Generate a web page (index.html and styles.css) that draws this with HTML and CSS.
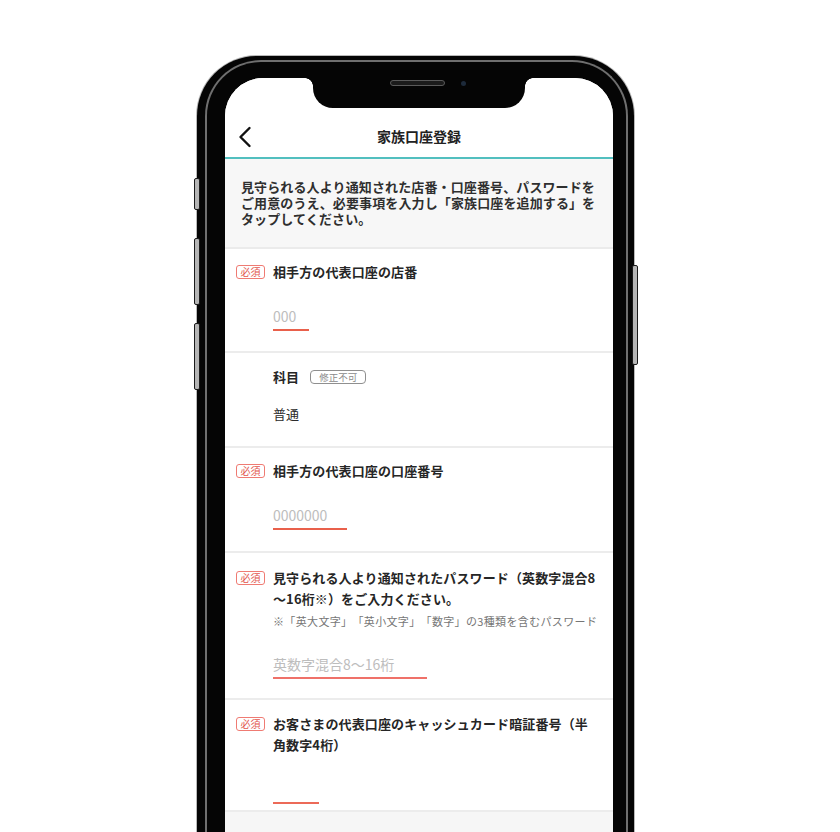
FILE: index.html
```html
<!DOCTYPE html>
<html lang="ja">
<head>
<meta charset="utf-8">
<title>家族口座登録</title>
<link rel="stylesheet" href="styles.css">
</head>
<body>
<div class="stage">
  <div class="phone">
    <span class="btn btn-mute"></span>
    <span class="btn btn-vol1"></span>
    <span class="btn btn-vol2"></span>
    <span class="btn btn-power"></span>
    <div class="screen">
      <div class="notch"><span class="speaker"></span><span class="camera"></span></div>
      <div class="status"></div>
      <header class="nav">
        <svg class="back" width="14" height="22" viewBox="0 0 14 22"><polyline points="11.5,2 2.5,11 11.5,20" fill="none" stroke="#111" stroke-width="2.4" stroke-linecap="round" stroke-linejoin="round"/></svg>
        <h1 class="title">家族口座登録</h1>
        <span></span>
      </header>
      <p class="intro">見守られる人より通知された店番・口座番号、パスワードを<br>ご用意のうえ、必要事項を入力し「家族口座を追加する」を<br>タップしてください。</p>

      <section class="field">
        <span class="badge">必須</span>
        <span class="label">相手方の代表口座の店番</span>
        <div class="input w-3">000</div>
      </section>

      <section class="field field-static">
        <div class="label-row"><span class="label">科目</span><span class="lock">修正不可</span></div>
        <div class="value">普通</div>
      </section>

      <section class="field field-acct">
        <span class="badge">必須</span>
        <span class="label">相手方の代表口座の口座番号</span>
        <div class="input w-7">0000000</div>
      </section>

      <section class="field field-pw">
        <span class="badge">必須</span>
        <span class="label">見守られる人より通知されたパスワード（英数字混合8<br>〜16桁※）をご入力ください。</span>
        <p class="note">※「英大文字」「英小文字」「数字」の3種類を含むパスワード</p>
        <div class="input w-pw">英数字混合8〜16桁</div>
      </section>

      <section class="field field-last">
        <span class="badge">必須</span>
        <span class="label">お客さまの代表口座のキャッシュカード暗証番号（半<br>角数字4桁）</span>
        <div class="input w-4"></div>
      </section>

      <div class="rest"></div>
    </div>
  </div>
</div>
</body>
</html>
```

FILE: styles.css
```css
html, body {
  margin: 0;
  padding: 0;
  background: #ffffff;
}
body {
  height: 832px;
  overflow: hidden;
  font-family: "Noto Sans CJK JP", "Noto Sans", sans-serif;
  color: #2b2b2b;
  text-spacing-trim: space-all;
}
.stage {
  padding: 56px 0 0 197px;
}
.phone {
  position: relative;
  width: 437px;
  height: 860px;
  box-sizing: border-box;
  padding: 22px 21px 0 28px;
  background: #050505;
  border-radius: 60px 60px 0 0;
  box-shadow: 0 0 0 1px #b9b9b9;
}
.phone::before {
  content: "";
  position: absolute;
  top: 4px;
  left: 8px;
  right: 6px;
  bottom: 0;
  border: 2px solid #6f6f6f;
  border-bottom: none;
  border-radius: 56px 56px 0 0;
  pointer-events: none;
}
.btn {
  position: absolute;
  width: 4px;
  background: #b5b5b5;
  border: 1px solid #1a1a1a;
  border-radius: 2px;
}
.btn-mute { left: -3px; top: 122px; height: 30px; }
.btn-vol1 { left: -3px; top: 182px; height: 65px; }
.btn-vol2 { left: -3px; top: 267px; height: 65px; }
.btn-power { right: -4px; top: 209px; height: 98px; }

.screen {
  position: relative;
  height: 100%;
  background: #f6f6f6;
  border-radius: 38px 38px 0 0;
  overflow: hidden;
}
.notch {
  position: absolute;
  top: 0;
  left: 88px;
  width: 212px;
  height: 30px;
  background: #050505;
  border-radius: 0 0 20px 20px;
}
.notch::before,
.notch::after {
  content: "";
  position: absolute;
  top: 0;
  width: 8px;
  height: 8px;
}
.notch::before {
  left: -8px;
  background: radial-gradient(circle at 0 100%, transparent 7.5px, #050505 8px);
}
.notch::after {
  right: -8px;
  background: radial-gradient(circle at 100% 100%, transparent 7.5px, #050505 8px);
}
.speaker {
  position: absolute;
  top: 2px;
  left: 77px;
  width: 53px;
  height: 4px;
  background: #1b1b1b;
  border: 1px solid #5a5a5a;
  border-radius: 3px;
}
.camera {
  position: absolute;
  top: 3px;
  left: 148px;
  width: 5px;
  height: 5px;
  border-radius: 50%;
  background: #1d2a3a;
}
.status {
  height: 38px;
  background: #ffffff;
}
.nav {
  display: grid;
  grid-template-columns: 1fr auto 1fr;
  align-items: center;
  height: 39px;
  padding-bottom: 2px;
  background: #ffffff;
  border-bottom: 2px solid #52bfbf;
}
.back {
  display: block;
  margin-left: 13px;
  margin-top: 3px;
}
.title {
  margin: 0;
  font-size: 14px;
  font-weight: 700;
  line-height: 20px;
  color: #222;
}
.intro {
  margin: 0;
  padding: 20px 12px 20px 16px;
  background: #f7f7f7;
  border-bottom: 2px solid #ebebeb;
  font-size: 13px;
  line-height: 16px;
  font-weight: 700;
  letter-spacing: 0.12px;
  color: #2f2f2f;
}
.field {
  display: grid;
  grid-template-columns: 29px 1fr;
  column-gap: 8px;
  align-items: start;
  padding: 12px 14px 20px 11px;
  background: #ffffff;
  border-bottom: 2px solid #ececec;
}
.badge {
  grid-column: 1;
  grid-row: 1;
  display: flex;
  align-items: center;
  justify-content: center;
  box-sizing: border-box;
  width: 29px;
  height: 14px;
  margin-top: 4px;
  border: 1px solid #ef7b73;
  border-radius: 3px;
  font-size: 10px;
  line-height: 10px;
  color: #e2564d;
}
.label {
  grid-column: 2;
  font-size: 13px;
  line-height: 21px;
  font-weight: 700;
  letter-spacing: 0.12px;
  color: #262626;
}
.note {
  grid-column: 2;
  margin: 4px 0 0;
  font-size: 11px;
  line-height: 16px;
  letter-spacing: 0.35px;
  color: #767676;
  white-space: nowrap;
}
.input {
  grid-column: 2;
  box-sizing: border-box;
  height: 26px;
  margin-top: 23px;
  border-bottom: 2px solid #e9604b;
  font-size: 14px;
  line-height: 22px;
  color: #bdbdbd;
  white-space: nowrap;
}
.w-3 { width: 36px; }
.w-7 { width: 74px; }
.w-pw { width: 154px; border-bottom-color: #ef7169; }
.w-4 { width: 46px; border-bottom-color: #ec6a58; }

.field-static {
  display: block;
  padding: 13px 14px 22px 48px;
}
.label-row {
  display: flex;
  align-items: center;
  gap: 11px;
}
.lock {
  display: flex;
  align-items: center;
  justify-content: center;
  box-sizing: border-box;
  width: 56px;
  height: 14px;
  border: 1px solid #8f8f8f;
  border-radius: 4px;
  font-size: 9.5px;
  line-height: 10px;
  color: #8a8a8a;
}
.value {
  margin-top: 17px;
  font-size: 13px;
  line-height: 20px;
  color: #2b2b2b;
}
.field-acct {
  padding-bottom: 21px;
}
.field-pw {
  padding-top: 14px;
  padding-bottom: 19px;
}
.field-pw .input {
  margin-top: 24px;
}
.field-last {
  padding-top: 13px;
  padding-bottom: 6px;
}
.rest {
  height: 200px;
  background: #f6f6f6;
}
```
